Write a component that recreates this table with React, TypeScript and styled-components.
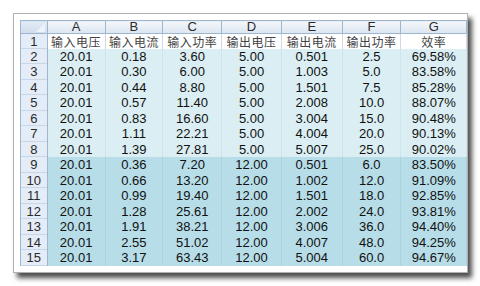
import React from 'react';
import styled, { createGlobalStyle } from 'styled-components';

const cols = ['A', 'B', 'C', 'D', 'E', 'F', 'G'];
const widths = [57, 57, 58, 59, 60, 58, 65];
const titles = ['输入电压', '输入电流', '输入功率', '输出电压', '输出电流', '输出功率', '效率'];

const rows = [
  ['20.01', '0.18', '3.60', '5.00', '0.501', '2.5', '69.58%'],
  ['20.01', '0.30', '6.00', '5.00', '1.003', '5.0', '83.58%'],
  ['20.01', '0.44', '8.80', '5.00', '1.501', '7.5', '85.28%'],
  ['20.01', '0.57', '11.40', '5.00', '2.008', '10.0', '88.07%'],
  ['20.01', '0.83', '16.60', '5.00', '3.004', '15.0', '90.48%'],
  ['20.01', '1.11', '22.21', '5.00', '4.004', '20.0', '90.13%'],
  ['20.01', '1.39', '27.81', '5.00', '5.007', '25.0', '90.02%'],
  ['20.01', '0.36', '7.20', '12.00', '0.501', '6.0', '83.50%'],
  ['20.01', '0.66', '13.20', '12.00', '1.002', '12.0', '91.09%'],
  ['20.01', '0.99', '19.40', '12.00', '1.501', '18.0', '92.85%'],
  ['20.01', '1.28', '25.61', '12.00', '2.002', '24.0', '93.81%'],
  ['20.01', '1.91', '38.21', '12.00', '3.006', '36.0', '94.40%'],
  ['20.01', '2.55', '51.02', '12.00', '4.007', '48.0', '94.25%'],
  ['20.01', '3.17', '63.43', '12.00', '5.004', '60.0', '94.67%'],
];

const GlobalStyle = createGlobalStyle`
  body {
    margin: 0;
    background: #fff;
    font-family: "Liberation Sans", Arial, "Noto Sans CJK SC", sans-serif;
  }
`;

const Page = styled.div`
  padding: 13px;
`;

const Card = styled.div`
  width: 455px;
  padding: 6px 0 6px 6px;
  box-sizing: border-box;
  background: #fff;
  border: 1px solid #b0b0b0;
  box-shadow: 4px 5px 5px rgba(0, 0, 0, 0.7);
`;

const Sheet = styled.table`
  border-collapse: collapse;
  table-layout: fixed;
  font-size: 13px;
  line-height: 13px;
  color: #111;
`;

const Corner = styled.th`
  position: relative;
  width: 26px;
  height: 12px;
  padding: 0;
  background: linear-gradient(#e3ebf6, #cfdcec);
  border: 1px solid #9eb6ce;
  overflow: hidden;

  &::after {
    content: '';
    position: absolute;
    right: 2px;
    bottom: 1px;
    border-left: 9px solid transparent;
    border-bottom: 9px solid #eef3fa;
  }
`;

const ColHead = styled.th<{ $w: number }>`
  width: ${(p) => p.$w}px;
  height: 12px;
  padding: 0;
  font-weight: normal;
  font-size: 13px;
  line-height: 12px;
  color: #2a2a2a;
  background: linear-gradient(#f4f7fb, #dbe5f1);
  border: 1px solid #9eb6ce;
`;

const RowHead = styled.th`
  padding: 0;
  font-weight: normal;
  font-size: 13px;
  line-height: 13px;
  color: #2a2a2a;
  background: #e4ecf7;
  border-left: 1px solid #9eb6ce;
  border-right: 1px solid #9eb6ce;
  box-shadow: inset 0 -1px 0 #c9d6e6;
`;

const Row = styled.tr<{ $h: number }>`
  height: ${(p) => p.$h}px;
`;

const Cell = styled.td<{ $tone: 'title' | 'light' | 'dark' }>`
  padding: 0;
  text-align: center;
  white-space: nowrap;
  overflow: hidden;
  line-height: 13px;
  color: ${(p) => (p.$tone === 'title' ? '#444' : '#111')};
  font-family: ${(p) =>
    p.$tone === 'title'
      ? '"Noto Sans CJK SC", "Liberation Sans", sans-serif'
      : '"Liberation Sans", Arial, sans-serif'};
  font-size: ${(p) => (p.$tone === 'title' ? '12px' : '13px')};
  letter-spacing: ${(p) => (p.$tone === 'title' ? '0.5px' : '0')};
  background: ${(p) =>
    p.$tone === 'title' ? '#ffffff' : p.$tone === 'light' ? '#daeef3' : '#b7dde8'};
  border-left: 1px solid
    ${(p) => (p.$tone === 'title' ? '#d0d7e5' : p.$tone === 'light' ? '#cfe5ec' : '#aad3de')};
  border-right: 1px solid
    ${(p) => (p.$tone === 'title' ? '#d0d7e5' : p.$tone === 'light' ? '#cfe5ec' : '#aad3de')};
`;

export default function App() {
  return (
    <Page>
      <GlobalStyle />
      <Card>
        <Sheet>
          <thead>
            <tr>
              <Corner />
              {cols.map((c, i) => (
                <ColHead key={c} $w={widths[i]}>
                  {c}
                </ColHead>
              ))}
            </tr>
          </thead>
          <tbody>
            <Row $h={15}>
              <RowHead>1</RowHead>
              {titles.map((t) => (
                <Cell key={t} $tone="title">
                  {t}
                </Cell>
              ))}
            </Row>
            {rows.map((r, i) => (
              <Row key={i} $h={i % 2 === 0 ? 15 : 16}>
                <RowHead>{i + 2}</RowHead>
                {r.map((v, j) => (
                  <Cell key={j} $tone={i < 7 ? 'light' : 'dark'}>
                    {v}
                  </Cell>
                ))}
              </Row>
            ))}
          </tbody>
        </Sheet>
      </Card>
    </Page>
  );
}
